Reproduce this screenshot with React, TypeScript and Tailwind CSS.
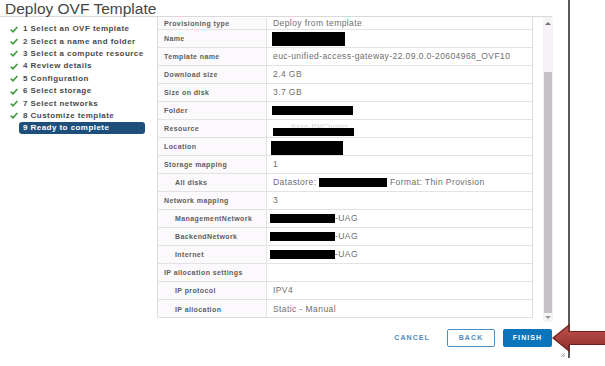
import React from 'react'

type Row = { label: string; value?: React.ReactNode; sub?: boolean }

const Redact = ({ w, h, className = '' }: { w: string; h: string; className?: string }) => (
  <span className={`inline-block bg-black ${w} ${h} ${className}`} />
)

const rows: Row[] = [
  { label: 'Provisioning type', value: 'Deploy from template' },
  { label: 'Name', value: <Redact w="w-[73px]" h="h-[14px]" className="-ml-[1px]" /> },
  { label: 'Template name', value: 'euc-unified-access-gateway-22.09.0.0-20604968_OVF10' },
  { label: 'Download size', value: '2.4 GB' },
  { label: 'Size on disk', value: '3.7 GB' },
  { label: 'Folder', value: <Redact w="w-[81px]" h="h-[9px]" className="-ml-[1px]" /> },
  {
    label: 'Resource',
    value: (
      <span className="flex flex-col leading-[7px] mt-[2px]">
        <span className="text-[#d4d4d4] text-[7px] pl-[18px]">Base-RMCluster</span>
        <Redact w="w-[81px]" h="h-[8px]" className="-mt-[2px]" />
      </span>
    ),
  },
  { label: 'Location', value: <Redact w="w-[72px]" h="h-[14px]" className="-ml-[2px] mt-[3px]" /> },
  { label: 'Storage mapping', value: '1' },
  {
    label: 'All disks',
    sub: true,
    value: (
      <span className="flex items-center">
        Datastore:&nbsp;
        <Redact w="w-[68px]" h="h-[9px]" />
        &nbsp;Format: Thin Provision
      </span>
    ),
  },
  { label: 'Network mapping', value: '3' },
  ...['ManagementNetwork', 'BackendNetwork', 'Internet'].map((n) => ({
    label: n,
    sub: true,
    value: (
      <span className="flex items-center -ml-[3px]">
        <Redact w="w-[65px]" h="h-[9px]" />
        -UAG
      </span>
    ),
  })),
  { label: 'IP allocation settings' },
  { label: 'IP protocol', value: 'IPV4', sub: true },
  { label: 'IP allocation', value: 'Static - Manual', sub: true },
]

const steps = [
  '1 Select an OVF template',
  '2 Select a name and folder',
  '3 Select a compute resource',
  '4 Review details',
  '5 Configuration',
  '6 Select storage',
  '7 Select networks',
  '8 Customize template',
]

const Check = () => (
  <svg width="8" height="7" viewBox="0 0 8 7" className="shrink-0">
    <polyline points="0.8,3.6 3,5.8 7.4,1" fill="none" stroke="#3f9a3a" strokeWidth="1.6" />
  </svg>
)

const App = () => {
  return (
    <div className="relative w-[605px] h-[366px] bg-white overflow-hidden flex font-['Liberation_Sans',Arial,sans-serif]">
      <div className="w-[570px] h-[358px] border-r-2 border-[#5a5a5a] flex flex-col">
        {/* header */}
        <div className="w-[552px] h-[17px] border-b border-[#d9d9d9]">
          <h1 className="pl-[5px] pt-[1px] text-[15.5px] leading-[16px] text-[#454545] font-normal">
            Deploy OVF Template
          </h1>
        </div>

        {/* body */}
        <div className="flex h-[305px]">
          <nav className="w-[157px] pt-[6px]">
            {steps.map((s) => (
              <div
                key={s}
                className="flex items-center gap-[5px] pl-[10px] h-[12.4px] text-[8px] font-bold tracking-[0.45px] text-[#4a4a4a] whitespace-nowrap"
              >
                <Check />
                {s}
              </div>
            ))}
            <div className="ml-[19px] w-[126px] h-[12px] rounded-[3px] bg-[#1e4f7a] pl-[4px] flex items-center text-[8px] font-bold tracking-[0.45px] text-white whitespace-nowrap">
              9 Ready to complete
            </div>
          </nav>

          <div className="w-[376px] h-[301px] border-x border-b border-[#dedede] overflow-hidden">
            <div className="-mt-[5px]">
              {rows.map((r, i) => (
                <div
                  key={i}
                  className={`grid grid-cols-[109px_265px] h-[18px] border-b border-[#e3e3e3] last:border-b-0 leading-[9px] ${
                    i === 0 ? 'pt-[6px]' : ''
                  }`}
                >
                  <div
                    className={`bg-[#fbf9fb] border-r border-[#e3e3e3] flex items-center text-[7px] font-bold tracking-[0.4px] text-[#5e5e5e] whitespace-nowrap ${
                      r.sub ? 'pl-[17px]' : 'pl-[6px]'
                    }`}
                  >
                    {r.label}
                  </div>
                  <div className="flex items-center pl-[6px] text-[8.5px] tracking-[0.42px] text-[#6e6e6e] whitespace-nowrap overflow-hidden">
                    {r.value}
                  </div>
                </div>
              ))}
            </div>
          </div>

          {/* scrollbar */}
          <div className="ml-[10px] w-[10px] h-[305px] bg-[#f6f3f6] flex flex-col items-center">
            <div className="h-[8px] flex items-end">
              <div className="w-0 h-0 border-x-[3px] border-x-transparent border-b-[3px] border-b-[#777]" />
            </div>
            <div className="mt-[47px] w-[8px] h-[241px] bg-[#c4c2c4]" />
            <div className="mt-[3px] w-0 h-0 border-x-[3px] border-x-transparent border-t-[3px] border-t-[#999]" />
          </div>
        </div>

        {/* footer */}
        <div className="w-[552px] flex justify-end items-center gap-[8px] pt-[7px]">
          <button className="px-[9px] h-[18px] text-[7px] font-bold tracking-[1.1px] text-[#4f8cc0]">CANCEL</button>
          <button className="w-[48px] h-[18px] border border-[#4a90c8] rounded-[2px] text-[7px] font-bold tracking-[1.1px] text-[#4f8cc0]">
            BACK
          </button>
          <button className="w-[49px] h-[18px] bg-[#0b75bb] rounded-[2px] text-[7px] font-bold tracking-[1.1px] text-white">
            FINISH
          </button>
        </div>
      </div>

      {/* resize grip */}
      <svg className="absolute left-[560px] top-[352px]" width="6" height="6" viewBox="0 0 6 6">
        <path d="M5 1 L1 5 M5 3 L3 5" stroke="#888" strokeWidth="0.8" />
      </svg>

      {/* red callout arrow */}
      <svg className="absolute left-[551px] top-[323px]" width="54" height="30" viewBox="0 0 54 30">
        <defs>
          <linearGradient id="arr" x1="0" y1="0" x2="0" y2="1">
            <stop offset="0" stopColor="#c0504d" />
            <stop offset="0.5" stopColor="#a8413e" />
            <stop offset="1" stopColor="#8c2c2a" />
          </linearGradient>
        </defs>
        <path d="M2 15 L18 2 L18 8.5 L56 8.5 L56 21.5 L18 21.5 L18 28 Z" fill="url(#arr)" stroke="#6f1f1e" strokeWidth="1.2" />
      </svg>
    </div>
  )
}

export default App
